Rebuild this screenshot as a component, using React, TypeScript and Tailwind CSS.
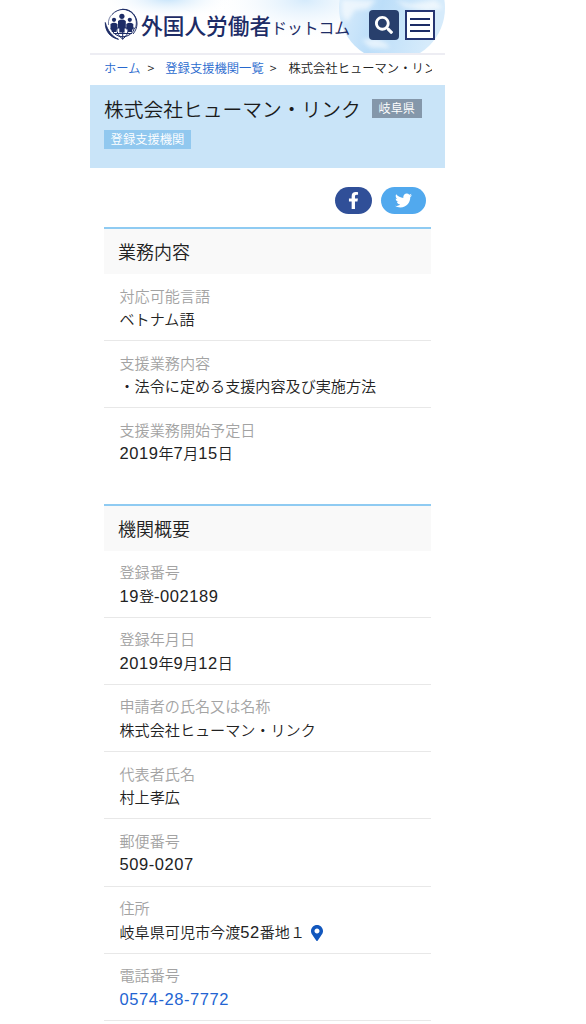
import { FaFacebookF, FaMapMarkerAlt, FaSearch, FaTwitter } from "react-icons/fa";

type Row = { label: string; value: string; kind?: "map" | "tel"; noLine?: boolean };

const BUSINESS: Row[] = [
  { label: "対応可能言語", value: "ベトナム語" },
  { label: "支援業務内容", value: "・法令に定める支援内容及び実施方法" },
  { label: "支援業務開始予定日", value: "2019年7月15日", noLine: true },
];

const OVERVIEW: Row[] = [
  { label: "登録番号", value: "19登-002189" },
  { label: "登録年月日", value: "2019年9月12日" },
  { label: "申請者の氏名又は名称", value: "株式会社ヒューマン・リンク" },
  { label: "代表者氏名", value: "村上孝広" },
  { label: "郵便番号", value: "509-0207" },
  { label: "住所", value: "岐阜県可児市今渡52番地１", kind: "map" },
  { label: "電話番号", value: "0574-28-7772", kind: "tel" },
];

function LogoMark() {
  return (
    <svg viewBox="0 0 34 34" className="h-[34px] w-[34px] shrink-0" fill="none" stroke="#1d2c66">
      {/* globe */}
      <path d="M7 21a12 11 0 0 0 23.500 0zM9.500 26.500h18.500M18.700 21v11.500M12.500 21q.5 7.500 6.200 11q5.300-3.500 6-11" strokeWidth="1" />
      {/* orbits */}
      <path d="M8 7.500C14 1 24 .5 29.500 7C34.500 13 34 21 29 27" strokeWidth="1" />
      <path d="M18 2.300C28 1.500 35 11 31.500 21C35 9 26 2.500 18 2.300z" fill="#1d2c66" strokeWidth=".5" />
      <path d="M1.300 15.500C1 24 6 30.500 14.500 32.300C8 29.500 3.500 23.500 1.300 15.500z" fill="#1d2c66" strokeWidth=".9" />
      <path d="M4.500 18C4 13 5.500 10 8 7.500" strokeWidth=".6" />
      {/* people */}
      <g fill="#1d2c66" stroke="none">
        <circle cx="10" cy="12.800" r="2.100" />
        <circle cx="25.800" cy="12.800" r="2.100" />
        <path d="M6.500 17q3.500-2.500 7 0v5.500h-1.200V25H7.800v-2.500H6.500zM22.300 17q3.500-2.500 7 0v5.500h-1.200V25h-4.500v-2.500h-1.300z" />
        <circle cx="17.900" cy="9.300" r="2.600" />
        <path d="M14 14q4-2.800 7.800 0v7h-1.200v4.500h-5.300V21H14z" />
      </g>
    </svg>
  );
}

function Header() {
  return (
    <header className="relative h-[53px] overflow-hidden bg-white">
      <svg viewBox="0 0 355 53" className="absolute inset-0 h-full w-full">
        <defs>
          <radialGradient id="sky">
            <stop offset="0" stopColor="#c3e2fa" />
            <stop offset="1" stopColor="#fff" stopOpacity="0" />
          </radialGradient>
          <linearGradient id="earth" x1="0" x2="1" y1="0" y2=".3">
            <stop offset="0" stopColor="#e3f1fc" />
            <stop offset=".5" stopColor="#bcdef9" />
            <stop offset="1" stopColor="#d6ebfb" />
          </linearGradient>
          <filter id="cloud">
            <feGaussianBlur stdDeviation="2" />
          </filter>
        </defs>
        <ellipse cx="78" cy="-2" rx="66" ry="22" fill="url(#sky)" />
        <ellipse cx="215" cy="0" rx="95" ry="42" fill="url(#sky)" opacity=".7" />
        <circle cx="302" cy="8" r="53" fill="url(#earth)" />
        <path
          d="M252 0h34l-8 9-13 1-8 12-5-8zM272 40l14-2 10 5 4 5h-20zM305 0l15 4 25-4 8 8-16 3-22-4z"
          fill="#fff"
          opacity=".6"
          filter="url(#cloud)"
        />
      </svg>
      <div className="relative flex h-full items-start pl-[14px]">
        <div className="mt-[7px]">
          <LogoMark />
        </div>
        <div className="ml-[3px] mt-[9px] flex w-[228px] items-baseline whitespace-nowrap leading-8 text-[#1d2c66]">
          <span className="text-[21.7px] font-medium">外国人労働者</span>
          <span className="text-[15.8px] font-normal">ドットコム</span>
        </div>
        <button className="mt-[10px] flex h-[30px] w-[30px] items-center justify-center rounded bg-[#283f6c] text-white">
          <FaSearch size={18} />
        </button>
        <button className="ml-[6px] mt-[10px] flex h-[30px] w-[30px] flex-col items-center justify-center gap-[4px] border-2 border-[#263572] bg-white">
          <span className="h-[2px] w-[20px] bg-[#1d2c66]" />
          <span className="h-[2px] w-[20px] bg-[#1d2c66]" />
          <span className="h-[2px] w-[20px] bg-[#1d2c66]" />
        </button>
      </div>
    </header>
  );
}

// Latin digits run wider than the default ones beside the kanji
function Value({ text }: { text: string }) {
  return (
    <>
      {text.split(/([0-9-]+)/).map((part, i) =>
        i % 2 ? (
          <span key={i} className="font-['Liberation_Sans',sans-serif] text-[16.5px] tracking-[0.55px]">
            {part}
          </span>
        ) : (
          part
        )
      )}
    </>
  );
}

function Section({ title, rows }: { title: string; rows: Row[] }) {
  return (
    <section className="mx-[14px]">
      <h2 className="flex h-[47px] items-center border-t-2 border-[#8fcbf2] bg-[#f9f9f9] pl-[14px] text-[18px] leading-[26px] text-[#222]">
        <span className="-mt-[1px]">{title}</span>
      </h2>
      <dl>
        {rows.map((r) => (
          <div
            key={r.label}
            className={`h-[67.2px] border-b pl-[15.5px] pt-[9.5px] text-[15.1px] leading-[23.5px] ${
              r.noLine ? "border-transparent" : "border-[#e8e8e8]"
            }`}
          >
            <dt className="h-[23.5px] text-[#a3a3a3]">{r.label}</dt>
            <dd className={r.kind === "tel" ? "h-[23.5px] text-[#2364d2]" : "h-[23.5px] text-[#222]"}>
              <Value text={r.value} />
              {r.kind === "map" && <FaMapMarkerAlt size={16} className="ml-[4px] inline align-[-3px] text-[#1257bd]" />}
            </dd>
          </div>
        ))}
      </dl>
    </section>
  );
}

export default function App() {
  return (
    <div className="h-[1024px] overflow-hidden bg-white font-['Noto_Sans_CJK_JP',sans-serif] font-[350]">
      <main className="ml-[90px] w-[355px]">
        <Header />
        <div className="h-[32px] border-t-2 border-[#ededf3] pr-[13px]">
          <nav className="overflow-hidden whitespace-nowrap pl-[14px] text-[12.3px] leading-[27px] text-[#222]">
            <a className="text-[#2869ce]">ホーム</a>
            <span className="ml-[7px] mr-[11px]">&gt;</span>
            <a className="text-[#2869ce]">登録支援機関一覧</a>
            <span className="ml-[6px] mr-[12px]">&gt;</span>
            <span>株式会社ヒューマン・リンク</span>
          </nav>
        </div>
        <div className="h-[83px] bg-[#c9e4f8] pl-[14px] pt-[9.5px]">
          <div className="flex items-center">
            <h1 className="whitespace-nowrap text-[19.75px] leading-[28px] text-[#1b1b1b]">株式会社ヒューマン・リンク</h1>
            <span className="ml-[11px] flex h-[19px] w-[50px] items-center justify-center bg-[#8497aa] text-[12.1px] text-white">
              岐阜県
            </span>
          </div>
          <span className="mt-[7px] flex h-[19px] w-[87px] items-center justify-center bg-[#91c8ef] text-[12.3px] text-white">
            登録支援機関
          </span>
        </div>
        <div className="flex h-[59px] gap-[9px] pl-[245px] pt-[18.5px]">
          <a className="flex h-[27px] w-[37px] items-center justify-center rounded-full bg-[#304f98] text-white">
            <FaFacebookF size={17} />
          </a>
          <a className="flex h-[27px] w-[45px] items-center justify-center rounded-full bg-[#51a9ee] text-white">
            <FaTwitter size={17} />
          </a>
        </div>
        <Section title="業務内容" rows={BUSINESS} />
        <div className="h-[28px]" />
        <Section title="機関概要" rows={OVERVIEW} />
      </main>
    </div>
  );
}
